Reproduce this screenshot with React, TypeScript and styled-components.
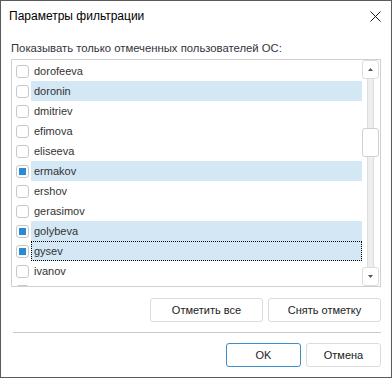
import styled, { createGlobalStyle } from 'styled-components';

const users = [
  { name: 'dorofeeva', checked: false },
  { name: 'doronin', checked: false, selected: true },
  { name: 'dmitriev', checked: false },
  { name: 'efimova', checked: false },
  { name: 'eliseeva', checked: false },
  { name: 'ermakov', checked: true, selected: true },
  { name: 'ershov', checked: false },
  { name: 'gerasimov', checked: false },
  { name: 'golybeva', checked: true, selected: true },
  { name: 'gysev', checked: true, selected: true, focused: true },
  { name: 'ivanov', checked: false },
  { name: 'kalinin', checked: false },
];

const GlobalStyle = createGlobalStyle`
  body {
    margin: 0;
    background: #fff;
    font-family: "Liberation Sans", "Noto Sans", sans-serif;
  }
`;

export default function App() {
  return (
    <>
      <GlobalStyle />
      <Dialog>
        <TitleBar>
          <Title>Параметры фильтрации</Title>
          <Close>
            <svg width="11" height="11" viewBox="0 0 11 11">
              <path d="M0.5 0.5 L10.5 10.5 M10.5 0.5 L0.5 10.5" stroke="#1a1a1a" strokeWidth="1" />
            </svg>
          </Close>
        </TitleBar>
        <Body>
          <Label>Показывать только отмеченных пользователей ОС:</Label>
          <ListBox>
            <Rows>
              {users.map((u) => (
                <Row key={u.name}>
                  <Check>{u.checked && <CheckMark />}</Check>
                  <RowText $selected={u.selected} $focused={u.focused}>{u.name}</RowText>
                </Row>
              ))}
            </Rows>
            <ScrollBar>
              <ScrollButton>
                <svg width="5" height="3" viewBox="0 0 5 3"><path d="M2.5 0 L5 3 L0 3 Z" fill="#555" /></svg>
              </ScrollButton>
              <Track>
                <Thumb />
              </Track>
              <ScrollButton>
                <svg width="5" height="3" viewBox="0 0 5 3"><path d="M0 0 L5 0 L2.5 3 Z" fill="#555" /></svg>
              </ScrollButton>
            </ScrollBar>
          </ListBox>
          <ButtonRow>
            <Button $width={113}>Отметить все</Button>
            <Button $width={113}>Снять отметку</Button>
          </ButtonRow>
          <Separator />
          <ButtonRow>
            <Button $width={75} $primary>OK</Button>
            <Button $width={75}>Отмена</Button>
          </ButtonRow>
        </Body>
      </Dialog>
    </>
  );
}

const Dialog = styled.div`
  width: 392px;
  height: 378px;
  box-sizing: border-box;
  border: 1px solid #5a5a5a;
  background: #fff;
  display: flex;
  flex-direction: column;
`;

const TitleBar = styled.div`
  height: 30px;
  padding: 0 9px 0 8px;
  display: flex;
  align-items: center;
  justify-content: space-between;
`;

const Title = styled.div`
  font-size: 12px;
  color: #000;
`;

const Close = styled.div`
  display: flex;
  margin-right: 1px;
`;

const Body = styled.div`
  padding: 0 10px;
  display: flex;
  flex-direction: column;
`;

const Label = styled.div`
  margin-top: 9px;
  line-height: 16px;
  font-size: 11.3px;
  color: #333340;
`;

const ListBox = styled.div`
  margin-top: 3px;
  height: 228px;
  box-sizing: border-box;
  border: 1px solid #d0d0d0;
  display: flex;
  overflow: hidden;
`;

const Rows = styled.div`
  flex: 1;
  padding-top: 1px;
  overflow: hidden;
`;

const Row = styled.div`
  height: 20px;
  display: flex;
  align-items: center;
`;

const Check = styled.div`
  width: 13px;
  height: 13px;
  box-sizing: border-box;
  margin: 0 2px 0 4px;
  border: 1px solid #c8c8c8;
  border-radius: 3px;
  display: flex;
  align-items: center;
  justify-content: center;
  flex-shrink: 0;
`;

const CheckMark = styled.div`
  width: 7px;
  height: 7px;
  background: #2a8bd4;
`;

const RowText = styled.div<{ $selected?: boolean; $focused?: boolean }>`
  flex: 1;
  height: 20px;
  box-sizing: border-box;
  padding-left: 3px;
  line-height: 20px;
  font-size: 11px;
  color: #333;
  background: ${(p) => (p.$selected ? '#d4e7f5' : 'transparent')};
  outline: ${(p) => (p.$focused ? '1px dotted #000' : 'none')};
  outline-offset: -1px;
`;

const ScrollBar = styled.div`
  width: 17px;
  margin-right: 1px;
  display: flex;
  flex-direction: column;
  align-items: center;
`;

const ScrollButton = styled.div`
  width: 17px;
  height: 19px;
  box-sizing: border-box;
  border: 1px solid #dcdcdc;
  border-radius: 3px;
  background: #fff;
  display: flex;
  align-items: center;
  justify-content: center;
  flex-shrink: 0;
`;

const Track = styled.div`
  flex: 1;
  width: 7px;
  box-sizing: border-box;
  background: #eeeeee;
  border-left: 1px solid #dedede;
  border-right: 1px solid #dedede;
  position: relative;
`;

const Thumb = styled.div`
  position: absolute;
  left: -6px;
  top: 49px;
  width: 17px;
  height: 29px;
  box-sizing: border-box;
  border: 1px solid #d0d0d0;
  border-radius: 3px;
  background: #fff;
`;

const ButtonRow = styled.div`
  margin-top: 11px;
  display: flex;
  justify-content: flex-end;
  gap: 5px;
`;

const Button = styled.div<{ $width: number; $primary?: boolean }>`
  width: ${(p) => p.$width}px;
  height: 24px;
  box-sizing: border-box;
  border: 1px solid ${(p) => (p.$primary ? '#3b8ed0' : '#dcdcdc')};
  border-radius: 3px;
  background: #fff;
  display: flex;
  align-items: center;
  justify-content: center;
  font-size: 11px;
  color: #222;
`;

const Separator = styled.div`
  margin: 10px 0 -1px 2px;
  height: 1px;
  background: #c8c8c8;
`;
